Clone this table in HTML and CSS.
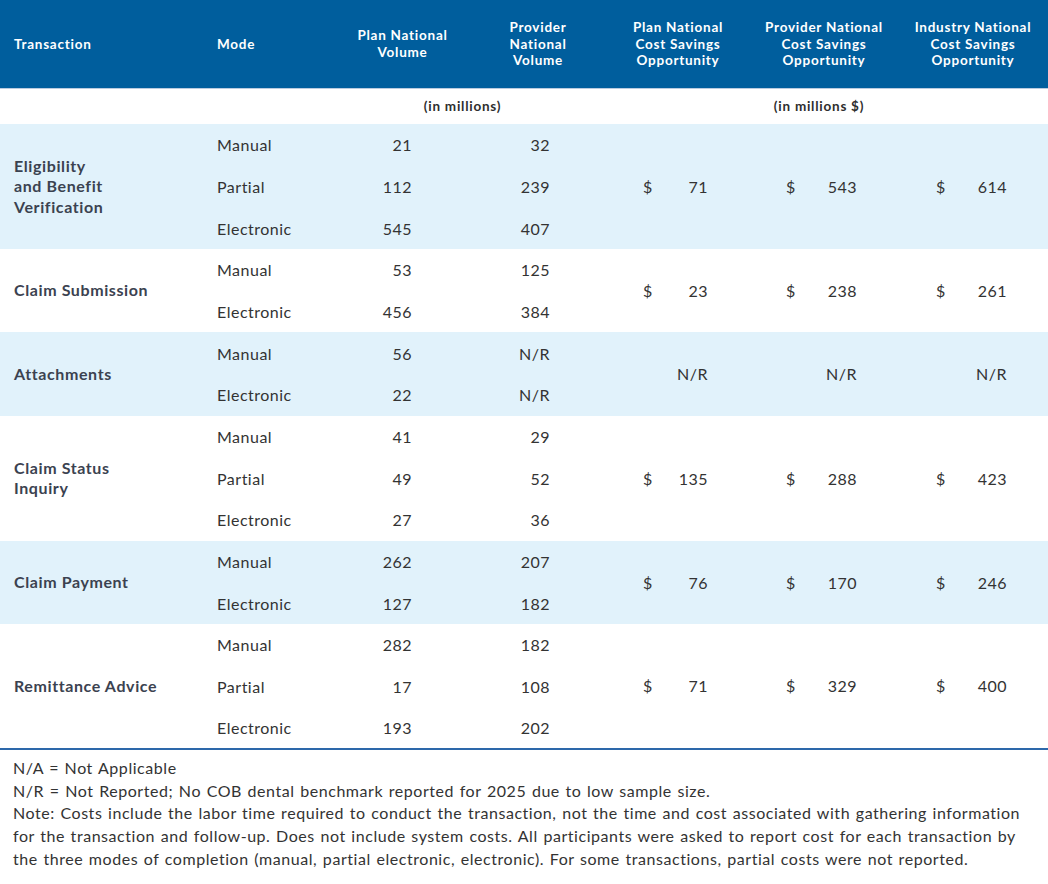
FILE: index.html
```html
<!DOCTYPE html>
<html lang="en">
<head>
<meta charset="utf-8">
<title>Transaction Cost Savings</title>
<link rel="stylesheet" href="styles.css">
</head>
<body>
<div class="page">
<table class="savings">
  <colgroup>
    <col class="c-trans"><col class="c-mode"><col class="c-pvol"><col class="c-prvol">
    <col class="c-pcost"><col class="c-prcost"><col class="c-icost">
  </colgroup>
  <thead>
    <tr class="head">
      <th class="left first">Transaction</th>
      <th class="left">Mode</th>
      <th>Plan National<br>Volume</th>
      <th>Provider<br>National<br>Volume</th>
      <th>Plan National<br>Cost Savings<br>Opportunity</th>
      <th>Provider National<br>Cost Savings<br>Opportunity</th>
      <th>Industry National<br>Cost Savings<br>Opportunity</th>
    </tr>
    <tr class="units">
      <td colspan="2"></td>
      <td colspan="2" class="unit-vol">(in millions)</td>
      <td colspan="3" class="unit-cost">(in millions $)</td>
    </tr>
  </thead>
  <tbody class="band">
    <tr>
      <td rowspan="3" class="trans">Eligibility<br>and Benefit<br>Verification</td>
      <td class="mode">Manual</td><td class="num vol1">21</td><td class="num vol2">32</td>
      <td rowspan="3" class="cost cost1"><span>$</span><span>71</span></td>
      <td rowspan="3" class="cost cost2"><span>$</span><span>543</span></td>
      <td rowspan="3" class="cost cost3"><span>$</span><span>614</span></td>
    </tr>
    <tr><td class="mode">Partial</td><td class="num vol1">112</td><td class="num vol2">239</td></tr>
    <tr><td class="mode">Electronic</td><td class="num vol1">545</td><td class="num vol2">407</td></tr>
  </tbody>
  <tbody>
    <tr>
      <td rowspan="2" class="trans">Claim Submission</td>
      <td class="mode">Manual</td><td class="num vol1">53</td><td class="num vol2">125</td>
      <td rowspan="2" class="cost cost1"><span>$</span><span>23</span></td>
      <td rowspan="2" class="cost cost2"><span>$</span><span>238</span></td>
      <td rowspan="2" class="cost cost3"><span>$</span><span>261</span></td>
    </tr>
    <tr><td class="mode">Electronic</td><td class="num vol1">456</td><td class="num vol2">384</td></tr>
  </tbody>
  <tbody class="band">
    <tr>
      <td rowspan="2" class="trans">Attachments</td>
      <td class="mode">Manual</td><td class="num vol1">56</td><td class="num vol2">N/R</td>
      <td rowspan="2" class="cost cost1 nr"><span>N/R</span></td>
      <td rowspan="2" class="cost cost2 nr"><span>N/R</span></td>
      <td rowspan="2" class="cost cost3 nr"><span>N/R</span></td>
    </tr>
    <tr><td class="mode">Electronic</td><td class="num vol1">22</td><td class="num vol2">N/R</td></tr>
  </tbody>
  <tbody>
    <tr>
      <td rowspan="3" class="trans">Claim Status<br>Inquiry</td>
      <td class="mode">Manual</td><td class="num vol1">41</td><td class="num vol2">29</td>
      <td rowspan="3" class="cost cost1"><span>$</span><span>135</span></td>
      <td rowspan="3" class="cost cost2"><span>$</span><span>288</span></td>
      <td rowspan="3" class="cost cost3"><span>$</span><span>423</span></td>
    </tr>
    <tr><td class="mode">Partial</td><td class="num vol1">49</td><td class="num vol2">52</td></tr>
    <tr><td class="mode">Electronic</td><td class="num vol1">27</td><td class="num vol2">36</td></tr>
  </tbody>
  <tbody class="band">
    <tr>
      <td rowspan="2" class="trans">Claim Payment</td>
      <td class="mode">Manual</td><td class="num vol1">262</td><td class="num vol2">207</td>
      <td rowspan="2" class="cost cost1"><span>$</span><span>76</span></td>
      <td rowspan="2" class="cost cost2"><span>$</span><span>170</span></td>
      <td rowspan="2" class="cost cost3"><span>$</span><span>246</span></td>
    </tr>
    <tr><td class="mode">Electronic</td><td class="num vol1">127</td><td class="num vol2">182</td></tr>
  </tbody>
  <tbody class="last">
    <tr>
      <td rowspan="3" class="trans">Remittance Advice</td>
      <td class="mode">Manual</td><td class="num vol1">282</td><td class="num vol2">182</td>
      <td rowspan="3" class="cost cost1"><span>$</span><span>71</span></td>
      <td rowspan="3" class="cost cost2"><span>$</span><span>329</span></td>
      <td rowspan="3" class="cost cost3"><span>$</span><span>400</span></td>
    </tr>
    <tr><td class="mode">Partial</td><td class="num vol1">17</td><td class="num vol2">108</td></tr>
    <tr><td class="mode">Electronic</td><td class="num vol1">193</td><td class="num vol2">202</td></tr>
  </tbody>
</table>
<div class="notes">
  <p>N/A = Not Applicable</p>
  <p>N/R = Not Reported; No COB dental benchmark reported for 2025 due to low sample size.</p>
  <p>Note: Costs include the labor time required to conduct the transaction, not the time and cost associated with gathering information<br>for the transaction and follow-up. Does not include system costs. All participants were asked to report cost for each transaction by<br>the three modes of completion (manual, partial electronic, electronic). For some transactions, partial costs were not reported.</p>
</div>
</div>
</body>
</html>
```

FILE: styles.css
```css
* { box-sizing: border-box; }
html, body { margin: 0; padding: 0; background: #ffffff; }
body {
  font-family: Lato, "Noto Sans", "Liberation Sans", sans-serif;
  color: #333333;
  width: 1048px;
}
.savings {
  width: 1048px;
  border-collapse: collapse;
  table-layout: fixed;
}
.c-trans { width: 203px; }
.c-mode { width: 132px; }
.c-pvol { width: 135px; }
.c-prvol { width: 136px; }
.c-pcost { width: 144px; }
.c-prcost { width: 148px; }
.c-icost { width: 150px; }

.head th {
  background: #005e9d;
  color: #ffffff;
  font-weight: 700;
  font-size: 13.5px;
  letter-spacing: 0.75px;
  line-height: 16.5px;
  height: 88px;
  padding: 0 2px;
  text-align: center;
  vertical-align: middle;
  border-bottom: 1px solid #b9cbe0;
}
.head th.left { text-align: left; padding-left: 14px; }

.units td {
  height: 36px;
  font-size: 13.5px;
  letter-spacing: 0.75px;
  font-weight: 700;
  color: #2e2e2e;
  text-align: center;
  vertical-align: middle;
  padding: 0;
}
.units .unit-vol { padding-right: 16px; }
.units .unit-cost { padding-right: 16px; }

tbody tr { height: 41.67px; }
tbody.band td { background: #e1f2fb; }
tbody.last tr:last-child td,
tbody.last td[rowspan] { border-bottom: 2px solid #2d68aa; }

tbody td {
  font-size: 16px;
  letter-spacing: 0.5px;
  padding: 0;
  vertical-align: middle;
  color: #333333;
}
.trans {
  font-weight: 700;
  font-size: 16px;
  letter-spacing: 0.6px;
  line-height: 20.5px;
  color: #3b4250;
  padding-left: 14px;
}
.mode { padding-left: 14px; }
.num { text-align: right; }
.vol1 { padding-right: 58px; }
.vol2 { padding-right: 56px; }

.cost span:first-child { float: left; }
.cost span:last-child { float: right; }
.cost::after { content: ""; display: block; clear: both; }
.cost.nr span { float: right; }
.cost1 { padding-left: 37px; padding-right: 42px; }
.cost2 { padding-left: 36px; padding-right: 41px; }
.cost3 { padding-left: 38px; padding-right: 41px; }

.notes {
  padding: 7px 0 0 13px;
  font-size: 16px;
  letter-spacing: 0.55px;
  word-spacing: 1px;
  line-height: 22.75px;
  color: #333333;
  white-space: nowrap;
}
.notes p { margin: 0; }
```
